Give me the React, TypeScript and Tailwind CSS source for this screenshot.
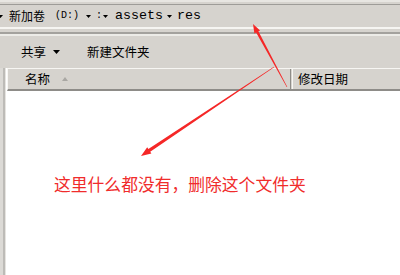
import React from "react";

function arrowPts(tx: number, ty: number, hx: number, hy: number, w0: number, w1: number, hl: number, hw: number) {
  const dx = hx - tx;
  const dy = hy - ty;
  const L = Math.hypot(dx, dy);
  const ux = dx / L;
  const uy = dy / L;
  const nx = -uy;
  const ny = ux;
  const bx = hx - ux * hl;
  const by = hy - uy * hl;
  const p = (x: number, y: number) => `${x.toFixed(1)},${y.toFixed(1)}`;
  return [
    p(tx + nx * w0 / 2, ty + ny * w0 / 2),
    p(bx + nx * w1 / 2, by + ny * w1 / 2),
    p(bx + nx * hw / 2, by + ny * hw / 2),
    p(hx, hy),
    p(bx - nx * hw / 2, by - ny * hw / 2),
    p(bx - nx * w1 / 2, by - ny * w1 / 2),
    p(tx - nx * w0 / 2, ty - ny * w0 / 2),
  ].join(" ");
}

function Tri({ w, h, color = "#000" }: { w: number; h: number; color?: string }) {
  return (
    <svg width={w} height={h} viewBox={`0 0 ${w} ${h}`} className="block">
      <polygon points={`0,0 ${w},0 ${w / 2},${h}`} fill={color} />
    </svg>
  );
}

export default function App() {
  const cjk = { fontFamily: '"Noto Sans CJK SC", "Noto Sans", sans-serif' };
  const mono = { fontFamily: '"Liberation Mono", "DejaVu Sans Mono", monospace' };
  return (
    <div className="relative w-[400px] h-[275px] overflow-hidden bg-white flex flex-col text-black" style={cjk}>
      <div className="h-[2px] bg-[#e8e6e2]" />
      <div className="h-[2px] bg-[#d6d3ce]" />
      <div className="h-[1px] bg-[#9e9c98]" />
      {/* address bar */}
      <div className="h-[22px] bg-[#d6d3ce] flex items-center">
        <div className="ml-[-2px]"><Tri w={5} h={3} /></div>
        <span className="ml-[6px] text-[12px] leading-none">新加卷</span>
        <span className="ml-[10px] text-[10px] leading-none" style={mono}>(D:)</span>
        <div className="ml-[7px]"><Tri w={5} h={3} /></div>
        <span className="ml-[5px] text-[10px] leading-none" style={mono}>:</span>
        <div className="ml-[1px]"><Tri w={5} h={3} /></div>
        <span className="ml-[7px] text-[13.33px] leading-none" style={mono}>assets</span>
        <div className="ml-[4px]"><Tri w={5} h={3} /></div>
        <span className="ml-[5px] text-[13.33px] leading-none" style={mono}>res</span>
      </div>
      <div className="h-[2px] bg-[#f6f5f2]" />
      <div className="h-[3px] bg-[#d6d3ce]" />
      <div className="h-[2px] bg-[#a3a19d]" />
      <div className="h-[2px] bg-[#ecebe7]" />
      {/* toolbar */}
      <div className="h-[32px] bg-[#d6d3ce] flex items-center">
        <span className="ml-[21px] text-[12.5px] leading-none">共享</span>
        <div className="ml-[7px]"><Tri w={7} h={4} /></div>
        <span className="ml-[27px] text-[12.5px] leading-none">新建文件夹</span>
      </div>
      {/* body */}
      <div className="flex flex-1">
        <div className="w-[6px] flex">
          <div className="w-[3px] bg-[#dcdad6]" />
          <div className="w-[2px] bg-[#bdbbb7]" />
          <div className="w-[1px] bg-[#e6e4e0]" />
        </div>
        <div className="flex-1 flex flex-col">
          <div className="h-[23px] flex bg-[#d6d3ce] border-t border-l border-t-[#f7f6f3] border-l-[#f7f6f3] ml-[1px] border-b-2 border-b-[#8e8c88]">
            <div className="w-[283px] flex items-center border-r border-r-[#8e8c88]">
              <span className="ml-[17px] text-[12.5px] leading-none">名称</span>
              <div className="ml-[12px]"><svg width="6" height="4" viewBox="0 0 6 4" className="block"><polygon points="0,4 6,4 3,0" fill="#a9a7a3" /></svg></div>
            </div>
            <div className="flex-1 flex items-center border-l border-l-[#f7f6f3] ml-[1px]">
              <span className="ml-[5px] text-[12.5px] leading-none">修改日期</span>
            </div>
          </div>
          <div className="flex-1 bg-white pl-[48px] pt-[81px]">
            <span className="text-[16.8px] leading-[20px] text-[#f02c2c] whitespace-nowrap">这里什么都没有，删除这个文件夹</span>
          </div>
        </div>
      </div>
      <svg className="absolute left-0 top-0" width="400" height="275" viewBox="0 0 400 275">
        <polygon points={arrowPts(287, 87, 253, 24, 0.6, 2.6, 9, 6.5)} fill="#f52727" />
        <polygon points={arrowPts(274, 67, 141, 156, 0.5, 3.2, 10, 7.5)} fill="#f52727" />
      </svg>
    </div>
  );
}
